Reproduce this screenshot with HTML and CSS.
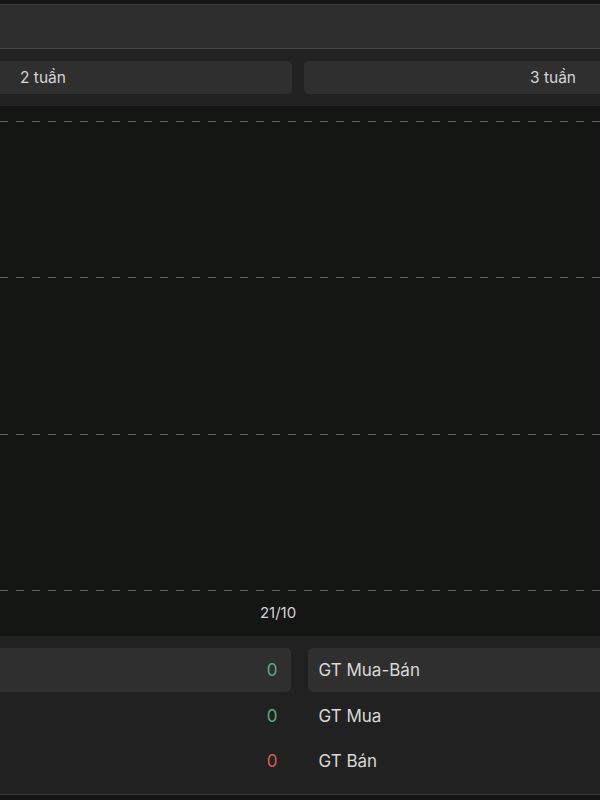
FILE: index.html
```html
<!DOCTYPE html>
<html lang="vi">
<head>
    <meta charset="UTF-8">
    <meta name="viewport" content="width=device-width, initial-scale=1.0">
    <title>GT Mua-Bán</title>
    <link rel="stylesheet" href="styles.css">
</head>
<body>
    <div class="screen">
        <div class="top-strip"></div>
        <div class="header-bar"></div>

        <div class="range-bar">
            <div class="range-row">
                <button class="range-btn left">2 tuần</button>
                <button class="range-btn right">3 tuần</button>
            </div>
        </div>

        <div class="chart">
            <div class="plot">
                <div class="grid-line"></div>
                <div class="grid-line"></div>
                <div class="grid-line"></div>
                <div class="grid-line"></div>
            </div>
            <div class="x-axis">21/10</div>
        </div>

        <div class="summary">
            <div class="summary-row active">
                <div class="cell value up">0</div>
                <div class="cell label">GT Mua-Bán</div>
            </div>
            <div class="summary-row">
                <div class="cell value up">0</div>
                <div class="cell label">GT Mua</div>
            </div>
            <div class="summary-row">
                <div class="cell value down">0</div>
                <div class="cell label">GT Bán</div>
            </div>
        </div>
        <div class="bottom-strip"></div>
    </div>
</body>
</html>
```

FILE: styles.css
```css
body {
    margin: 0;
    background-color: #141414;
    font-family: Inter, 'Noto Sans', sans-serif;
    color: #d6d6d6;
    overflow: hidden;
}

.screen {
    width: 600px;
    height: 800px;
    overflow: hidden;
}

.top-strip {
    height: 4px;
    background-color: #151515;
    border-bottom: 1px solid #3b3b3b;
}

.header-bar {
    height: 43px;
    background-color: #2e2e2e;
    border-bottom: 1px solid #474747;
}

.range-bar {
    background-color: #222222;
    padding: 12px 0;
}

.range-row {
    display: grid;
    grid-template-columns: 1fr 1fr;
    gap: 12px;
    margin: 0 -10px 0 -14px;
}

.range-btn {
    height: 33px;
    border: none;
    border-radius: 5px;
    background-color: #2f2f2f;
    color: #d4d4d4;
    font-family: inherit;
    font-size: 15.5px;
    padding: 0 34px;
}

.range-btn.left {
    text-align: left;
}

.range-btn.right {
    text-align: right;
}

.chart {
    height: 530px;
    background-color: #141614;
    padding-top: 15px;
    box-sizing: border-box;
}

.plot {
    height: 470px;
    display: flex;
    flex-direction: column;
    justify-content: space-between;
}

.grid-line {
    height: 1px;
    background-image: repeating-linear-gradient(to right, #626262 0, #626262 8px, transparent 8px, transparent 16px);
}

.x-axis {
    height: 45px;
    line-height: 44px;
    text-align: center;
    padding-right: 44px;
    font-size: 15px;
    color: #d2d2d2;
}

.summary {
    background-color: #212121;
    padding: 12px 0 11px;
    border-bottom: 1px solid #393939;
}

.summary-row {
    display: grid;
    grid-template-columns: 1fr 1fr;
    gap: 17px;
    margin: 0 -10px 0 -12px;
    height: 45px;
}

.summary-row:first-child {
    height: 44px;
    margin-bottom: 1px;
}

.cell {
    display: flex;
    align-items: center;
    font-size: 17px;
    border-radius: 5px;
}

.summary-row.active .cell {
    background-color: #2f2f2f;
}

.value {
    justify-content: flex-end;
    padding-right: 13px;
}

.label {
    padding-left: 11px;
    color: #d8d8d8;
}

.up {
    color: #5fa883;
}

.down {
    color: #d65c58;
}

.bottom-strip {
    height: 10px;
    background-color: #141414;
}
```
